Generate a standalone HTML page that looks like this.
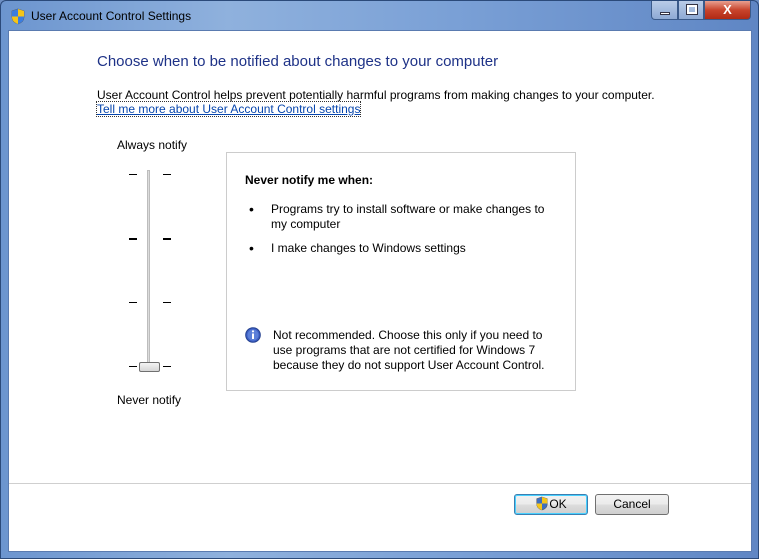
<!DOCTYPE html>
<html><head><meta charset="utf-8"><style>
*{margin:0;padding:0;box-sizing:border-box}
body{width:759px;height:559px;overflow:hidden;font-family:"Liberation Sans","DejaVu Sans",sans-serif;font-size:12px;color:#000;background:#6d8fc4}
.frame{position:absolute;left:0;top:0;width:759px;height:559px;background:linear-gradient(90deg,#6c95cf 0%,#8fb1dd 30%,#7aa0d6 60%,#5f86c4 100%);border:1px solid #2b4a7a;border-radius:6px 6px 0 0}
.title{position:absolute;left:30px;top:8px;font-size:12px;color:#000}
.client{position:absolute;left:7px;top:29px;width:744px;height:522px;background:#fff;border:1px solid #5a7bb0}
.abs{position:absolute}
.btn{position:absolute;border:1px solid #707070;border-radius:3px;background:linear-gradient(#f2f2f2,#ebebeb 50%,#dddddd 51%,#cfcfcf);text-align:center;line-height:19px;font-size:12px}
.tick{position:absolute;height:2px;width:8px;background:#000}
.wb{position:absolute;top:0;height:19px;border:1px solid #3a5a8a;border-top:none}
</style></head><body>
<div class="frame">
<svg class="abs" style="left:9px;top:7px" width="16" height="17" viewBox="0 0 16 17"><path d="M8 1 L14 3 L14 9 C14 13 11 15 8 16 C5 15 2 13 2 9 L2 3Z" fill="#3f6fc0" stroke="#555" stroke-width=".6"/><path d="M8 1 L8 8.5 L2 8.5 L2 3Z" fill="#3b7de0"/><path d="M8 1 L14 3 L14 8.5 L8 8.5Z" fill="#f5c518"/><path d="M2 8.5 L8 8.5 L8 16 C5 15 2 13 2 9Z" fill="#f5c518"/><path d="M8 8.5 L14 8.5 L14 9 C14 13 11 15 8 16Z" fill="#3b7de0"/></svg>
<div class="title">User Account Control Settings</div>
<div class="wb" style="left:650px;width:27px;background:linear-gradient(#b9cce8,#8eaad4);border-radius:0 0 0 4px"><div class="abs" style="left:8px;top:11px;width:10px;height:3px;background:#fff;border:1px solid #334"></div></div>
<div class="wb" style="left:677px;width:26px;background:linear-gradient(#b9cce8,#8eaad4)"><div class="abs" style="left:8px;top:4px;width:10px;height:9px;border:2px solid #fff;outline:1px solid #334"></div></div>
<div class="wb" style="left:703px;width:47px;background:linear-gradient(#e8a090,#c8442c 50%,#b02a14);border-radius:0 0 4px 0;color:#fff;font-weight:bold;text-align:center;line-height:18px;font-size:13px">X</div>
<div class="client">
<div class="abs" style="left:88px;top:22px;font-size:15px;color:#1e3287">Choose when to be notified about changes to your computer</div>
<div class="abs" style="left:88px;top:57px">User Account Control helps prevent potentially harmful programs from making changes to your computer.</div>
<div class="abs" style="left:88px;top:71px;color:#0645ad;text-decoration:underline;outline:1px dotted #333">Tell me more about User Account Control settings</div>
<div class="abs" style="left:108px;top:107px">Always notify</div>
<div class="abs" style="left:108px;top:362px">Never notify</div>
<div class="abs" style="left:138px;top:139px;width:3px;height:198px;background:#dcdcdc;border:1px solid #bdbdbd"></div>
<div class="tick" style="left:120px;top:143px;height:1px"></div><div class="tick" style="left:154px;top:143px;height:1px"></div>
<div class="tick" style="left:120px;top:207px"></div><div class="tick" style="left:154px;top:207px"></div>
<div class="tick" style="left:120px;top:271px;height:1px"></div><div class="tick" style="left:154px;top:271px;height:1px"></div>
<div class="tick" style="left:120px;top:335px;height:1px"></div><div class="tick" style="left:154px;top:335px;height:1px"></div>
<div class="abs" style="left:130px;top:331px;width:21px;height:10px;border:1px solid #707070;border-radius:2px;background:linear-gradient(#f4f4f4,#d6d6d6)"></div>
<div class="abs" style="left:217px;top:121px;width:350px;height:239px;border:1px solid #ccc">
<div class="abs" style="left:18px;top:20px;font-weight:bold">Never notify me when:</div>
<div class="abs" style="left:22px;top:50px;font-size:14px;line-height:12px">•</div>
<div class="abs" style="left:44px;top:49px;width:290px;line-height:15px">Programs try to install software or make changes to my computer</div>
<div class="abs" style="left:22px;top:89px;font-size:14px;line-height:12px">•</div>
<div class="abs" style="left:44px;top:88px">I make changes to Windows settings</div>
<svg class="abs" style="left:18px;top:174px" width="16" height="16" viewBox="0 0 16 16"><circle cx="8" cy="8" r="7.3" fill="#3d5fc4" stroke="#23408f"/><circle cx="8" cy="8" r="5.5" fill="#5b7fd8"/><rect x="7" y="6.5" width="2" height="5.5" fill="#fff"/><circle cx="8" cy="4.3" r="1.1" fill="#fff"/></svg>
<div class="abs" style="left:46px;top:175px;width:290px;line-height:15px">Not recommended. Choose this only if you need to use programs that are not certified for Windows 7 because they do not support User Account Control.</div>
</div>
<div class="abs" style="left:0;top:452px;width:742px;height:1px;background:#cfcfcf"></div>
<div class="btn" style="left:505px;top:463px;width:74px;height:21px;border-color:#3c7fb1;box-shadow:inset 0 0 0 1px #48d0ff"><svg style="vertical-align:-3px" width="14" height="15" viewBox="0 0 16 17"><path d="M8 1 L14 3 L14 9 C14 13 11 15 8 16 C5 15 2 13 2 9 L2 3Z" fill="#3f6fc0" stroke="#555" stroke-width=".6"/><path d="M8 1 L14 3 L14 8.5 L8 8.5Z" fill="#f5c518"/><path d="M2 8.5 L8 8.5 L8 16 C5 15 2 13 2 9Z" fill="#f5c518"/></svg>OK</div>
<div class="btn" style="left:586px;top:463px;width:74px;height:21px">Cancel</div>
</div>
</div>
</body></html>
